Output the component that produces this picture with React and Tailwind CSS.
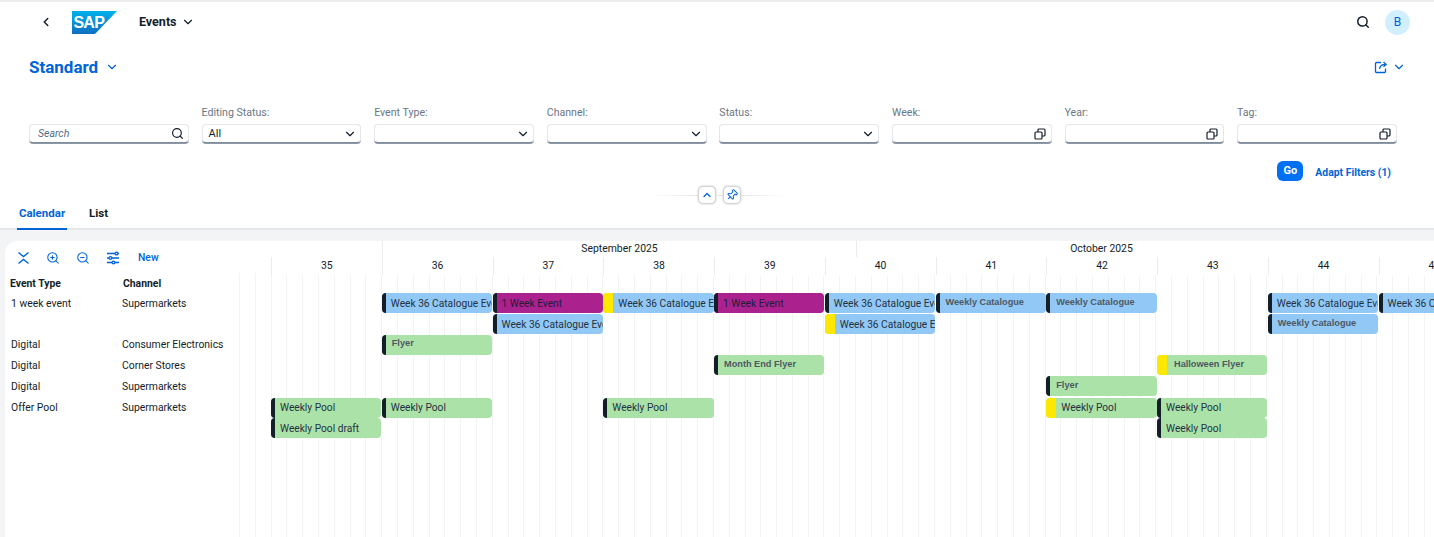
import { ChevronLeft, ChevronDown, ChevronUp, Search, ZoomIn, ZoomOut, Pin } from 'lucide-react'

const filters = [
  { label: 'Editing Status:', value: 'All', kind: 'select' },
  { label: 'Event Type:', kind: 'select' },
  { label: 'Channel:', kind: 'select' },
  { label: 'Status:', kind: 'select' },
  { label: 'Week:', kind: 'help' },
  { label: 'Year:', kind: 'help' },
  { label: 'Tag:', kind: 'help' },
]

const weeks = [35, 36, 37, 38, 39, 40, 41, 42, 43, 44, 45]

const blue = 'bg-[#91c8f6]'
const green = 'bg-[#abe2a8]'
const purple = 'bg-[#ab218e]'

// col = week column, row = lane, bold = the grey "draft style" label
const events = [
  { text: 'Week 36 Catalogue Event', pos: 'col-start-2 row-start-1', color: blue },
  { text: '1 Week Event', pos: 'col-start-3 row-start-1', color: purple },
  { text: 'Week 36 Catalogue Event', pos: 'col-start-4 row-start-1', color: blue, flag: true },
  { text: '1 Week Event', pos: 'col-start-5 row-start-1', color: purple },
  { text: 'Week 36 Catalogue Event', pos: 'col-start-6 row-start-1', color: blue },
  { text: 'Weekly Catalogue', pos: 'col-start-7 row-start-1', color: blue, bold: true },
  { text: 'Weekly Catalogue', pos: 'col-start-8 row-start-1', color: blue, bold: true },
  { text: 'Week 36 Catalogue Event', pos: 'col-start-10 row-start-1', color: blue },
  { text: 'Week 36 Catalogue Event', pos: 'col-start-11 row-start-1', color: blue },
  { text: 'Week 36 Catalogue Event', pos: 'col-start-3 row-start-2', color: blue },
  { text: 'Week 36 Catalogue Event', pos: 'col-start-6 row-start-2', color: blue, flag: true },
  { text: 'Weekly Catalogue', pos: 'col-start-10 row-start-2', color: blue, bold: true },
  { text: 'Flyer', pos: 'col-start-2 row-start-3', color: green, bold: true },
  { text: 'Month End Flyer', pos: 'col-start-5 row-start-4', color: green, bold: true },
  { text: 'Halloween Flyer', pos: 'col-start-9 row-start-4', color: green, bold: true, flag: true },
  { text: 'Flyer', pos: 'col-start-8 row-start-5', color: green, bold: true },
  { text: 'Weekly Pool', pos: 'col-start-1 row-start-6', color: green },
  { text: 'Weekly Pool', pos: 'col-start-2 row-start-6', color: green },
  { text: 'Weekly Pool', pos: 'col-start-4 row-start-6', color: green },
  { text: 'Weekly Pool', pos: 'col-start-8 row-start-6', color: green, flag: true },
  { text: 'Weekly Pool', pos: 'col-start-9 row-start-6', color: green },
  { text: 'Weekly Pool draft', pos: 'col-start-1 row-start-7', color: green },
  { text: 'Weekly Pool', pos: 'col-start-9 row-start-7', color: green },
]

const rowLabels = [
  { type: '1 week event', channel: 'Supermarkets', h: 'h-[41px]' },
  { type: 'Digital', channel: 'Consumer Electronics', h: 'h-[21px]' },
  { type: 'Digital', channel: 'Corner Stores', h: 'h-[21px]' },
  { type: 'Digital', channel: 'Supermarkets', h: 'h-[21px]' },
  { type: 'Offer Pool', channel: 'Supermarkets', h: 'h-[41px]' },
]

function ValueHelpIcon() {
  return (
    <svg width="12" height="12" viewBox="0 0 12 12" fill="none" stroke="#131e29" strokeWidth="1.2">
      <rect x="1" y="4" width="7" height="7" rx="1" />
      <path d="M4 4V2a1 1 0 0 1 1-1h5a1 1 0 0 1 1 1v5a1 1 0 0 1-1 1H8" />
    </svg>
  )
}

function FieldBox({ children, className = '' }) {
  return (
    <div className={`h-[19px] rounded-[4px] bg-white border border-[#e5e7ea] border-b-[#7f8c9b] shadow-[0_1px_0_#8d99a6] flex items-center justify-between ${className}`}>
      {children}
    </div>
  )
}

function SapLogo() {
  return (
    <svg width="45" height="23" viewBox="0 0 45 23">
      <defs>
        <linearGradient id="sapBlue" x1="0" y1="0" x2="0" y2="1">
          <stop offset="0" stopColor="#00b1eb" />
          <stop offset="1" stopColor="#0f6fc0" />
        </linearGradient>
      </defs>
      <polygon points="0,0 45,0 23,23 0,23" fill="url(#sapBlue)" />
      <text x="1.5" y="16.5" fontFamily="Liberation Sans" fontWeight="700" fontSize="16" letterSpacing="-0.8" fill="#fff">SAP</text>
    </svg>
  )
}

function EventBar({ ev }) {
  const purpleBar = ev.color === purple
  return (
    <div className={`${ev.pos} ${ev.color} h-5 rounded-[4px] overflow-hidden flex items-center whitespace-nowrap mr-[0.5px]`}>
      {ev.flag ? <div className="w-2.5 h-full bg-[#ffe800] shrink-0" /> : <div className="w-1 h-full bg-[#131e29] shrink-0" />}
      {ev.bold ? (
        <span className={`text-[9.2px] font-bold text-[#4f5963] pb-px [font-family:'Liberation_Sans',sans-serif] ${ev.flag ? 'pl-[7px]' : 'pl-1.5'}`}>{ev.text}</span>
      ) : (
        <span className={`text-[10.2px] ${purpleBar ? 'text-[#1d1d3a]' : 'text-[#243242]'} pl-[5px] pt-px`}>{ev.text}</span>
      )}
    </div>
  )
}

export default function App() {
  return (
    <div className="w-[1434px] h-[537px] overflow-hidden bg-white text-[#131e29] font-['Roboto',sans-serif] text-[10.4px] flex flex-col border-t-2 border-[#ededed]">
      {/* Shell bar */}
      <header className="h-10 shrink-0 flex items-center pl-[39px] pr-6">
        <ChevronLeft className="w-3.5 h-3.5 text-[#131e29]" strokeWidth={2.5} />
        <div className="ml-[19px]"><SapLogo /></div>
        <span className="ml-[22px] text-[12.5px] font-bold">Events</span>
        <ChevronDown className="ml-1 w-3.5 h-3.5" strokeWidth={2} />
        <Search className="ml-auto w-3.5 h-3.5 mr-[15px]" strokeWidth={2.5} />
        <div className="w-[25px] h-[25px] rounded-full bg-[#d1efff] text-[#0064d9] text-[12px] flex items-center justify-center">B</div>
      </header>

      {/* Variant title */}
      <div className="h-[30px] mt-2.5 shrink-0 flex items-center pl-[29px] pr-[28px]">
        <h1 className="text-[17px] font-bold text-[#0064d9] pt-px">Standard</h1>
        <ChevronDown className="ml-[7px] w-3.5 h-3.5 text-[#0064d9]" />
        <svg className="ml-auto" width="14" height="14" viewBox="0 0 14 14" fill="none" stroke="#0064d9" strokeWidth="1.3">
          <path d="M7 2.5H2.5a1 1 0 0 0-1 1v8a1 1 0 0 0 1 1h8a1 1 0 0 0 1-1V8.5" />
          <path d="M5.5 9c.3-3 2-4.6 6-4.6M9.5 2l2.6 2.4-2.6 2.4" />
        </svg>
        <ChevronDown className="ml-1 w-3.5 h-3.5 text-[#0064d9]" />
      </div>

      {/* Filters */}
      <div className="mt-[22px] shrink-0 grid grid-cols-8 gap-x-[12.7px] pl-[29px] pr-[37px] items-end">
        <FieldBox className="pl-2 pr-1">
          <span className="text-[10.5px] italic text-[#556b82]">Search</span>
          <Search className="w-[13px] h-[13px]" strokeWidth={2.2} />
        </FieldBox>
        {filters.map((f) => (
          <div key={f.label}>
            <div className="text-[10.6px] leading-[18px] mb-0.5 text-[#6a7684]">{f.label}</div>
            <FieldBox className={f.kind === 'select' ? 'pl-1.5 pr-[3px]' : 'pl-1.5 pr-[5px]'}>
              <span className="text-[11px] pt-px">{f.value}</span>
              {f.kind === 'select' ? <ChevronDown className="w-3.5 h-3.5" strokeWidth={2} /> : <ValueHelpIcon />}
            </FieldBox>
          </div>
        ))}
      </div>

      {/* Filter actions */}
      <div className="mt-[18px] h-5 shrink-0 flex items-center justify-end pr-[43px]">
        <button className="w-[26px] h-5 rounded-[6px] bg-[#0070f2] text-white text-[11px] font-bold">Go</button>
        <span className="ml-3 text-[10.4px] font-bold text-[#0064d9] pt-[3px]">Adapt Filters (1)</span>
      </div>

      {/* Collapse and pin */}
      <div className="mt-[5px] h-[18px] shrink-0 flex items-center justify-center pl-[3px]">
        <div className="w-[46px] h-px bg-gradient-to-r from-white to-[#e5e5e5]" />
        <button className="w-[18px] h-[18px] rounded-[5px] bg-white border border-[#d0d5da] shadow-[0_0_2px_#bbb] flex items-center justify-center">
          <ChevronUp className="w-3 h-3 text-[#0064d9]" strokeWidth={2.5} />
        </button>
        <div className="w-[7px] h-px bg-[#e5e5e5]" />
        <button className="w-[18px] h-[18px] rounded-[5px] bg-white border border-[#d0d5da] shadow-[0_0_2px_#bbb] flex items-center justify-center">
          <Pin className="w-3 h-3 text-[#0064d9] rotate-45" strokeWidth={2} />
        </button>
        <div className="w-[44px] h-px bg-gradient-to-r from-[#e5e5e5] to-white" />
      </div>

      {/* Tabs */}
      <nav className="-mt-[3px] h-[29px] shrink-0 flex items-stretch pl-[17px] border-b-2 border-[#e5e7ea] text-[11.5px] font-bold">
        <div className="w-[50px] -mb-0.5 border-b-2 border-[#0064d9] text-[#0064d9] text-center pt-[4px]">Calendar</div>
        <div className="ml-[22px] pt-[4px]">List</div>
      </nav>

      {/* Calendar */}
      <div className="flex-1 min-h-0 bg-[#f3f4f5] pt-[11px] pl-[5px]">
        <div className="h-full bg-white rounded-tl-xl overflow-hidden flex">
          {/* Left labels */}
          <div className="w-[234px] shrink-0">
            <div className="h-[32px] pt-px pl-[12px] flex items-center gap-[16px] text-[#0064d9]">
              <svg width="13" height="14" viewBox="0 0 13 14" fill="none" stroke="#0064d9" strokeWidth="1.4">
                <path d="M1.5 1.5 6.5 5.5l5-4M1.5 12.5 6.5 8.5l5 4" />
              </svg>
              <ZoomIn className="w-3.5 h-3.5" strokeWidth={1.8} />
              <ZoomOut className="w-3.5 h-3.5" strokeWidth={1.8} />
              <svg width="14" height="14" viewBox="0 0 14 14" fill="none" stroke="#0064d9" strokeWidth="1.3">
                <path d="M1 2.5h8M12 2.5h1M1 7h2M6 7h7M1 11.5h5M9 11.5h4" />
                <circle cx="10.5" cy="2.5" r="1.4" />
                <circle cx="4.5" cy="7" r="1.4" />
                <circle cx="7.5" cy="11.5" r="1.4" />
              </svg>
              <span className="text-[10.4px] font-medium ml-[2px]">New</span>
            </div>
            <div className="flex pl-[5px] h-[20px] mt-px items-center text-[10.4px] font-bold">
              <div className="w-[113px]">Event Type</div>
              <div>Channel</div>
            </div>
            <div className="-mt-px">
              {rowLabels.map((r, i) => (
                <div key={i} className={`flex pl-[6px] leading-[21px] ${r.h}`}>
                  <div className="w-[111px]">{r.type}</div>
                  <div>{r.channel}</div>
                </div>
              ))}
            </div>
          </div>

          {/* Timeline */}
          <div className="flex-1 min-w-0 relative">
            <div className="absolute left-0 top-[32px] bottom-0 flex">
              {Array.from({ length: 76 }).map((_, i) => (
                <div key={i} className="w-[15.81px] border-l border-[#f2f3f4]" />
              ))}
            </div>
            <div className="relative pl-[32px]">
              <div className="flex h-[16px] leading-[16px]">
                <div className="w-[111px]" />
                <div className="w-[474px] border-l border-[#eaecee] text-center">September 2025</div>
                <div className="w-[490px] border-l border-[#eaecee] text-center">October 2025</div>
              </div>
              <div className="grid grid-cols-[repeat(11,110.75px)] h-[16px] leading-[18px]">
                {weeks.map((w) => (
                  <div key={w} className="border-l border-[#eaecee] text-center bg-white">{w}</div>
                ))}
              </div>
              <div className="mt-[20px] grid grid-cols-[repeat(11,110.75px)] grid-rows-[21px_20.5px_20.5px_21px_21.5px_20.5px_20px]">
                {events.map((ev, i) => <EventBar key={i} ev={ev} />)}
              </div>
            </div>
          </div>
        </div>
      </div>
    </div>
  )
}
